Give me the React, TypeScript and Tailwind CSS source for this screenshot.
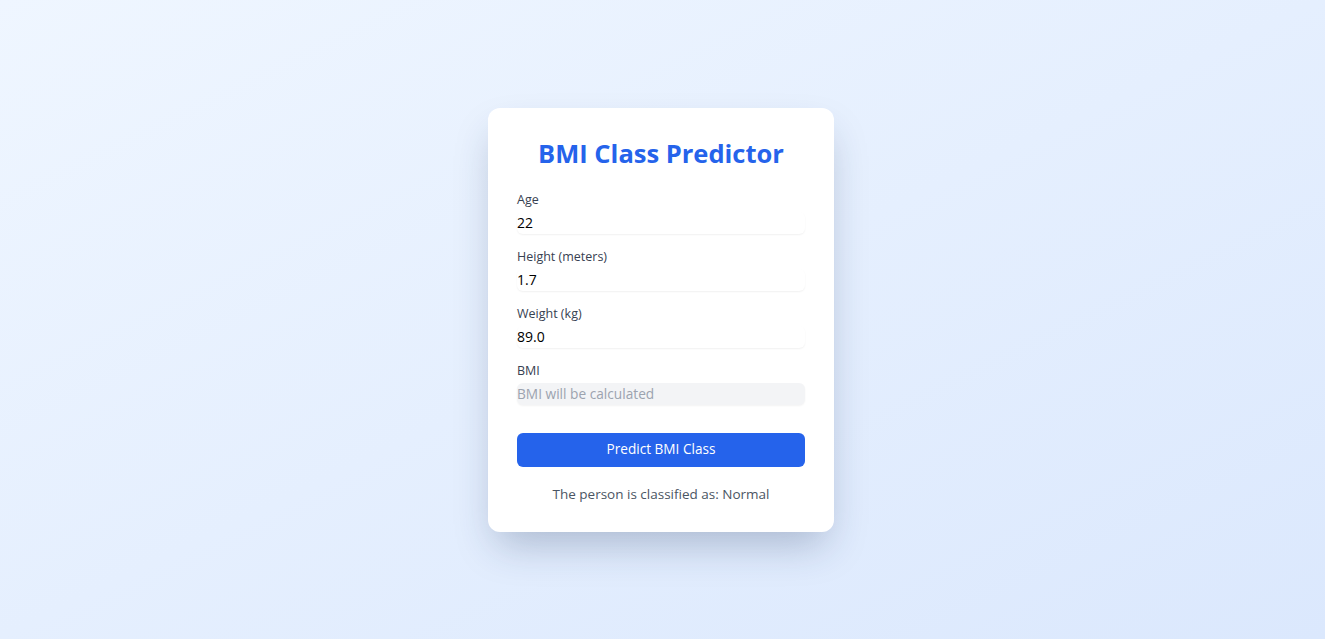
import { useState } from 'react';

const fields = [
  { label: 'Age', value: '22' },
  { label: 'Height (meters)', value: '1.7' },
  { label: 'Weight (kg)', value: '89.0' },
];

export default function App() {
  const [values, setValues] = useState(fields.map(f => f.value));

  return (
    <div
      className="min-h-screen w-full flex items-center justify-center pr-[3px] bg-gradient-to-br from-[#eff6ff] to-[#dbe8fd]"
      style={{ fontFamily: '"Open Sans", "Noto Sans", sans-serif' }}
    >
      <div className="w-[346px] bg-white rounded-xl shadow-[0_20px_40px_-8px_rgba(30,50,90,0.28)] px-[29px] pt-[27px] pb-[28px]">
        <h1 className="text-[25.5px] leading-[36px] font-bold text-[#2563eb] text-center mb-[19px]">
          BMI Class Predictor
        </h1>

        <div className="flex flex-col gap-[13px]">
          {fields.map((field, i) => (
            <div key={field.label} className="flex flex-col gap-[2px]">
              <label className="text-[12.5px] leading-5 font-medium text-[#374151]">{field.label}</label>
              <input
                value={values[i]}
                onChange={e => {
                  const next = [...values];
                  next[i] = e.target.value;
                  setValues(next);
                }}
                className="h-[22px] w-full rounded-md shadow-[0_1px_2px_rgba(0,0,0,0.06)] text-[14px] text-black outline-none"
              />
            </div>
          ))}
          <div className="flex flex-col gap-[2px]">
            <label className="text-[12.5px] leading-5 font-medium text-[#374151]">BMI</label>
            <input
              readOnly
              placeholder="BMI will be calculated"
              className="h-[22px] w-full rounded-md bg-[#f3f4f6] shadow-[0_1px_2px_rgba(0,0,0,0.05)] text-[13.7px] placeholder:text-[#9ca3af] outline-none"
            />
          </div>
        </div>

        <button className="mt-[28px] h-[34px] w-full rounded-md bg-[#2563eb] text-white text-[13.6px]">
          Predict BMI Class
        </button>

        <p className="mt-[17px] text-[13.5px] leading-5 text-[#4b5563] text-center">
          The person is classified as: Normal
        </p>
      </div>
    </div>
  );
}
